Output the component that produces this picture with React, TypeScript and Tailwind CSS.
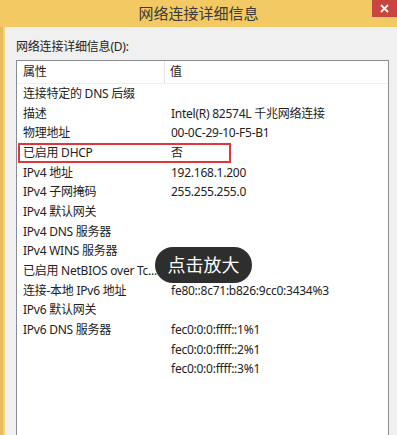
import React from "react";

const rows: [string, string][] = [
  ["连接特定的 DNS 后缀", ""],
  ["描述", "Intel(R) 82574L 千兆网络连接"],
  ["物理地址", "00-0C-29-10-F5-B1"],
  ["已启用 DHCP", "否"],
  ["IPv4 地址", "192.168.1.200"],
  ["IPv4 子网掩码", "255.255.255.0"],
  ["IPv4 默认网关", ""],
  ["IPv4 DNS 服务器", ""],
  ["IPv4 WINS 服务器", ""],
  ["已启用 NetBIOS over Tc...", "是"],
  ["连接-本地 IPv6 地址", "fe80::8c71:b826:9cc0:3434%3"],
  ["IPv6 默认网关", ""],
  ["IPv6 DNS 服务器", "fec0:0:0:ffff::1%1"],
  ["", "fec0:0:0:ffff::2%1"],
  ["", "fec0:0:0:ffff::3%1"],
];

export default function App() {
  return (
    <div
      className="relative w-[397px] h-[435px] overflow-hidden bg-[#f0f0f0] text-[#222]"
      style={{ fontFamily: '"Noto Sans", "Noto Sans CJK SC", sans-serif' }}
    >
      <div className="relative h-[27px] bg-[#f2c962] flex items-center justify-center">
        <span className="text-[15px] text-[#3a3a3a] leading-none">网络连接详细信息</span>
        <div className="absolute right-0 top-0 w-[25px] h-[17px] bg-[#c9453f] flex items-center justify-center">
          <svg width="9" height="9" viewBox="0 0 9 9">
            <path d="M1 1L8 8M8 1L1 8" stroke="#fff" strokeWidth="1.8" />
          </svg>
        </div>
      </div>
      <div className="flex h-[408px]">
        <div className="w-[5px] flex">
          <div className="w-[3px] bg-[#e5bb60]" />
          <div className="w-[2px] bg-[#f3d27a]" />
        </div>
        <div className="flex-1 pl-[11px] pr-[8px] pt-[12px]">
          <div className="text-[12px] leading-[16px] h-[16px] mb-[5px] tracking-[-0.2px]">网络连接详细信息(D):</div>
          <div className="relative bg-white border border-[#8a8d93] h-[400px] text-[12px] tracking-[-0.25px]">
            <div className="flex h-[23px] items-center border-b border-[#f0f0f0]">
              <div className="w-[148px] pl-[6px] border-r border-[#e5e5e5] h-full flex items-center">属性</div>
              <div className="pl-[5px]">值</div>
            </div>
            {rows.map(([k, v], i) => (
              <div key={i} className="flex h-[19.7px] items-center whitespace-nowrap">
                <div className="w-[148px] pl-[6px] overflow-hidden">{k}</div>
                <div className="pl-[6px]">{v}</div>
              </div>
            ))}
            <div className="absolute left-[1px] top-[82px] w-[213px] h-[20px] border-2 border-[#e0363c]" />
          </div>
        </div>
      </div>
      <div className="absolute left-[155px] top-[247px] w-[97px] h-[36px] rounded-full bg-[#2e2e2e] flex items-center justify-center">
        <span className="text-white text-[18px] leading-none">点击放大</span>
      </div>
    </div>
  );
}
